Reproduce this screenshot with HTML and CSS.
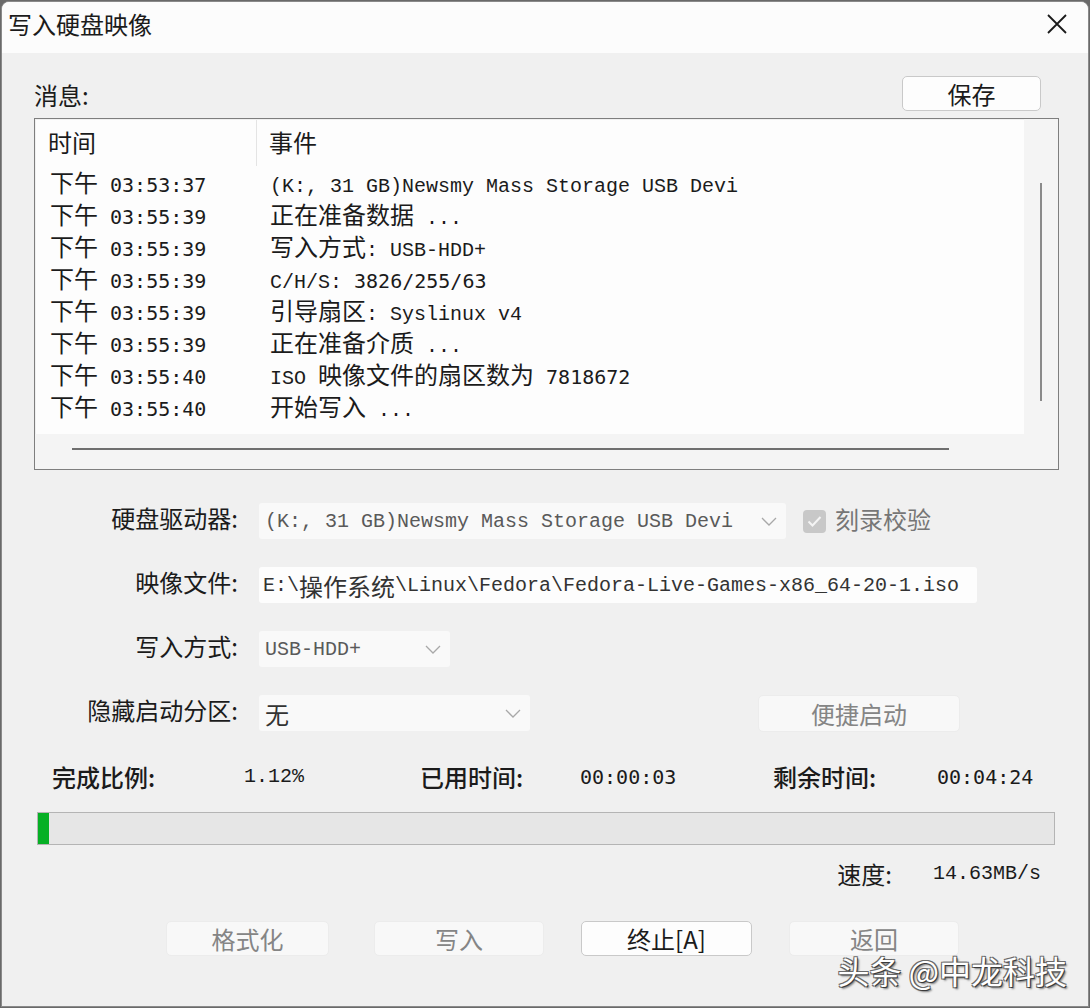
FILE: index.html
```html
<!DOCTYPE html>
<html>
<head>
    <meta charset="UTF-8">
    <title>写入硬盘映像</title>
    <link rel="stylesheet" href="styles.css">
</head>
<body>
    <div class="window">
        <div class="titlebar">
            <span class="title">写入硬盘映像</span>
            <svg class="close" width="22" height="22" viewBox="0 0 22 22">
                <path d="M2 2 L20 20 M20 2 L2 20" stroke="#1a1a1a" stroke-width="1.8" fill="none"/>
            </svg>
        </div>

        <div class="content">
            <div class="msg-head">
                <span class="msg-label">消息:</span>
                <button class="btn save">保存</button>
            </div>

            <div class="log">
                <div class="list">
                    <div class="list-head">
                        <div class="col-time">时间</div>
                        <div class="col-event">事件</div>
                    </div>
                    <div class="row"><div class="col-time">下午<span class="num"> 03:53:37</span></div><div class="col-event"><span class="mono">(K:, 31 GB)Newsmy Mass Storage USB Devi</span></div></div>
                    <div class="row"><div class="col-time">下午<span class="num"> 03:55:39</span></div><div class="col-event">正在准备数据<span class="mono"> ...</span></div></div>
                    <div class="row"><div class="col-time">下午<span class="num"> 03:55:39</span></div><div class="col-event">写入方式<span class="mono">: USB-HDD+</span></div></div>
                    <div class="row"><div class="col-time">下午<span class="num"> 03:55:39</span></div><div class="col-event"><span class="mono">C/H/S: </span><span class="num">3826/255/63</span></div></div>
                    <div class="row"><div class="col-time">下午<span class="num"> 03:55:39</span></div><div class="col-event">引导扇区<span class="mono">: Syslinux v4</span></div></div>
                    <div class="row"><div class="col-time">下午<span class="num"> 03:55:39</span></div><div class="col-event">正在准备介质<span class="mono"> ...</span></div></div>
                    <div class="row"><div class="col-time">下午<span class="num"> 03:55:40</span></div><div class="col-event"><span class="mono">ISO </span>映像文件的扇区数为<span class="num"> 7818672</span></div></div>
                    <div class="row"><div class="col-time">下午<span class="num"> 03:55:40</span></div><div class="col-event">开始写入<span class="mono"> ...</span></div></div>
                </div>
                <div class="vscroll"><div class="vthumb"></div></div>
                <div class="hscroll"><div class="hthumb"></div></div>
                <div class="corner"></div>
            </div>

            <div class="form">
                <div class="label">硬盘驱动器:</div>
                <div class="field">
                    <div class="select drive-select">
                        <span class="mono dim">(K:, 31 GB)Newsmy Mass Storage USB Devi</span>
                        <svg class="chev" width="16" height="9" viewBox="0 0 16 9"><path d="M1 1 L8 8 L15 1" stroke="#a8a8a8" stroke-width="1.3" fill="none"/></svg>
                    </div>
                    <div class="check">
                        <svg width="23" height="23" viewBox="0 0 23 23">
                            <rect x="0" y="0" width="23" height="23" rx="4" fill="#c8c8c8"/>
                            <path d="M5.5 11.5 L9.5 15.5 L17.5 7" stroke="#f4f4f4" stroke-width="2" fill="none"/>
                        </svg>
                        <span class="check-label">刻录校验</span>
                    </div>
                </div>

                <div class="label">映像文件:</div>
                <div class="field">
                    <div class="input path-input"><span class="mono">E:\</span>操作系统<span class="mono">\Linux\Fedora\Fedora-Live-Games-x86_64-20-1.iso</span></div>
                </div>

                <div class="label">写入方式:</div>
                <div class="field">
                    <div class="select mode-select">
                        <span class="mono dim">USB-HDD+</span>
                        <svg class="chev" width="16" height="9" viewBox="0 0 16 9"><path d="M1 1 L8 8 L15 1" stroke="#a8a8a8" stroke-width="1.3" fill="none"/></svg>
                    </div>
                </div>

                <div class="label">隐藏启动分区:</div>
                <div class="field">
                    <div class="select hide-select">
                        <span class="none">无</span>
                        <svg class="chev" width="16" height="9" viewBox="0 0 16 9"><path d="M1 1 L8 8 L15 1" stroke="#a8a8a8" stroke-width="1.3" fill="none"/></svg>
                    </div>
                    <button class="btn disabled quick">便捷启动</button>
                </div>
            </div>

            <div class="stats">
                <span class="stat-label">完成比例:</span>
                <span class="mono">1.12%</span>
                <span class="stat-label">已用时间:</span>
                <span class="num">00:00:03</span>
                <span class="stat-label">剩余时间:</span>
                <span class="num">00:04:24</span>
            </div>

            <div class="progress"><div class="fill" style="width: 1.12%"></div></div>

            <div class="speed">
                <span class="speed-label">速度:</span>
                <span class="mono">14.63MB/s</span>
            </div>

            <div class="actions">
                <button class="btn disabled fmt">格式化</button>
                <button class="btn disabled">写入</button>
                <button class="btn stop">终止[A]</button>
                <button class="btn disabled">返回</button>
            </div>
        </div>

        <div class="watermark">头条 @中龙科技</div>
    </div>
</body>
</html>
```

FILE: styles.css
```css
* {
    box-sizing: border-box;
}
html, body {
    margin: 0;
    padding: 0;
}
body {
    width: 1090px;
    height: 1008px;
    overflow: hidden;
    background: #6a6a6a;
    font-family: "Noto Sans CJK SC", sans-serif;
    font-size: 24px;
    color: #1b1b1b;
}
.window {
    position: relative;
    width: 1088px;
    height: 1006px;
    margin: 1px;
    background: #f0f0f0;
    border: 1px solid #8a8a8a;
    border-radius: 8px 8px 0 0;
    overflow: hidden;
}
.titlebar {
    height: 51px;
    background: #fcfcfc;
    display: flex;
    align-items: center;
    justify-content: space-between;
    padding: 0 20px 7px 6px;
}
.title {
    line-height: 30px;
}
.close {
    display: block;
}
.content {
    padding: 0 29px 0 32px;
}
.mono {
    font-family: "Liberation Mono", monospace;
    font-size: 20px;
}
.num {
    font-family: "DejaVu Sans Mono", monospace;
    font-size: 20px;
}
.dim {
    color: #5a5a5a;
}

/* message header */
.msg-head {
    display: flex;
    justify-content: space-between;
    align-items: flex-end;
    margin-top: 23px;
    height: 35px;
}
.msg-label {
    line-height: 32px;
}
.btn {
    font-family: "Noto Sans CJK SC", sans-serif;
    font-size: 24px;
    color: #1b1b1b;
    background: #fdfdfd;
    border: 1px solid #c9c9c9;
    border-radius: 5px;
    height: 35px;
    padding: 0;
    line-height: 29px;
}
.btn.disabled {
    color: #858585;
    background: #f8f8f8;
    border-color: #ececec;
}
.save {
    width: 139px;
    margin-right: 18px;
}

/* log list */
.log {
    margin-top: 7px;
    height: 352px;
    border: 1px solid #7e7e7e;
    display: grid;
    grid-template-columns: 1fr 34px;
    grid-template-rows: 315px 1fr;
}
.list {
    background: #fdfdfd;
    margin: 1px 0 0 1px;
}
.list-head, .row {
    display: grid;
    grid-template-columns: 221px 1fr;
}
.list-head {
    height: 46px;
}
.list-head .col-time {
    height: 46px;
    line-height: 44px;
    border-right: 1px solid #e4e4e4;
    padding-left: 12px;
}
.list-head .col-event {
    line-height: 44px;
    padding-left: 12px;
}
.row {
    height: 32px;
    line-height: 32px;
    white-space: nowrap;
}
.row .col-time {
    padding-left: 14px;
}
.row .col-event {
    padding-left: 13px;
}
.vscroll {
    background: #f4f4f4;
    padding-top: 64px;
    display: flex;
    justify-content: center;
}
.vthumb {
    width: 2px;
    height: 218px;
    background: #8a8a8a;
}
.hscroll {
    background: #f4f4f4;
    padding: 14px 0 0 37px;
}
.hthumb {
    width: 877px;
    height: 2px;
    background: #6e6e6e;
}
.corner {
    background: #f4f4f4;
}

/* form */
.form {
    margin-top: 33px;
    display: grid;
    grid-template-columns: 206px 1fr;
    column-gap: 19px;
    row-gap: 28px;
}
.label {
    text-align: right;
    line-height: 30px;
    white-space: nowrap;
    padding-right: 2px;
}
.field {
    display: flex;
    align-items: center;
    height: 36px;
}
.select, .input {
    height: 36px;
    background: #f9f9f9;
    border-radius: 3px;
    display: flex;
    align-items: center;
    padding-left: 6px;
    white-space: nowrap;
}
.select {
    justify-content: space-between;
    padding-right: 9px;
}
.input {
    background: #fdfdfd;
    color: #333;
    padding-left: 4px;
}
.drive-select {
    width: 527px;
}
.path-input {
    width: 718px;
}
.mode-select {
    width: 191px;
}
.hide-select {
    width: 271px;
}
.none {
    color: #333;
}
.check {
    display: flex;
    align-items: center;
    margin-left: 17px;
}
.check svg {
    display: block;
}
.check-label {
    color: #767676;
    margin-left: 9px;
    line-height: 30px;
    padding-bottom: 4px;
}
.quick {
    width: 202px;
    height: 37px;
    margin-left: 228px;
}

/* status */
.stats {
    margin-top: 30px;
    padding-left: 18px;
    display: grid;
    grid-template-columns: 192px 176px 160px 193px 164px auto;
    line-height: 32px;
    white-space: nowrap;
}
.stat-label {
    font-weight: 500;
}
.progress {
    margin: 19px 0 0 3px;
    width: 1018px;
    height: 33px;
    border: 1px solid #b4b4b4;
    background: #e6e6e6;
}
.fill {
    height: 100%;
    background: #06b025;
}
.speed {
    margin-top: 13px;
    display: flex;
    justify-content: flex-end;
    padding-right: 18px;
    line-height: 32px;
}
.speed-label {
    margin-right: 41px;
}
.actions {
    margin-top: 31px;
    display: flex;
    gap: 37px;
    padding-left: 132px;
}
.actions .btn {
    width: 170px;
}
.actions .fmt {
    width: 163px;
    margin-right: 8px;
}
.actions .stop {
    width: 171px;
}
.watermark {
    position: absolute;
    right: 21px;
    bottom: 22px;
    font-size: 32px;
    line-height: 28px;
    color: #ffffff;
    text-shadow: 1px 1px 0 #3a3a3a, -1px -1px 0 #6a6a6a, 1px -1px 0 #6a6a6a, -1px 1px 0 #6a6a6a, 2px 2px 2px rgba(0, 0, 0, 0.5);
}
```
